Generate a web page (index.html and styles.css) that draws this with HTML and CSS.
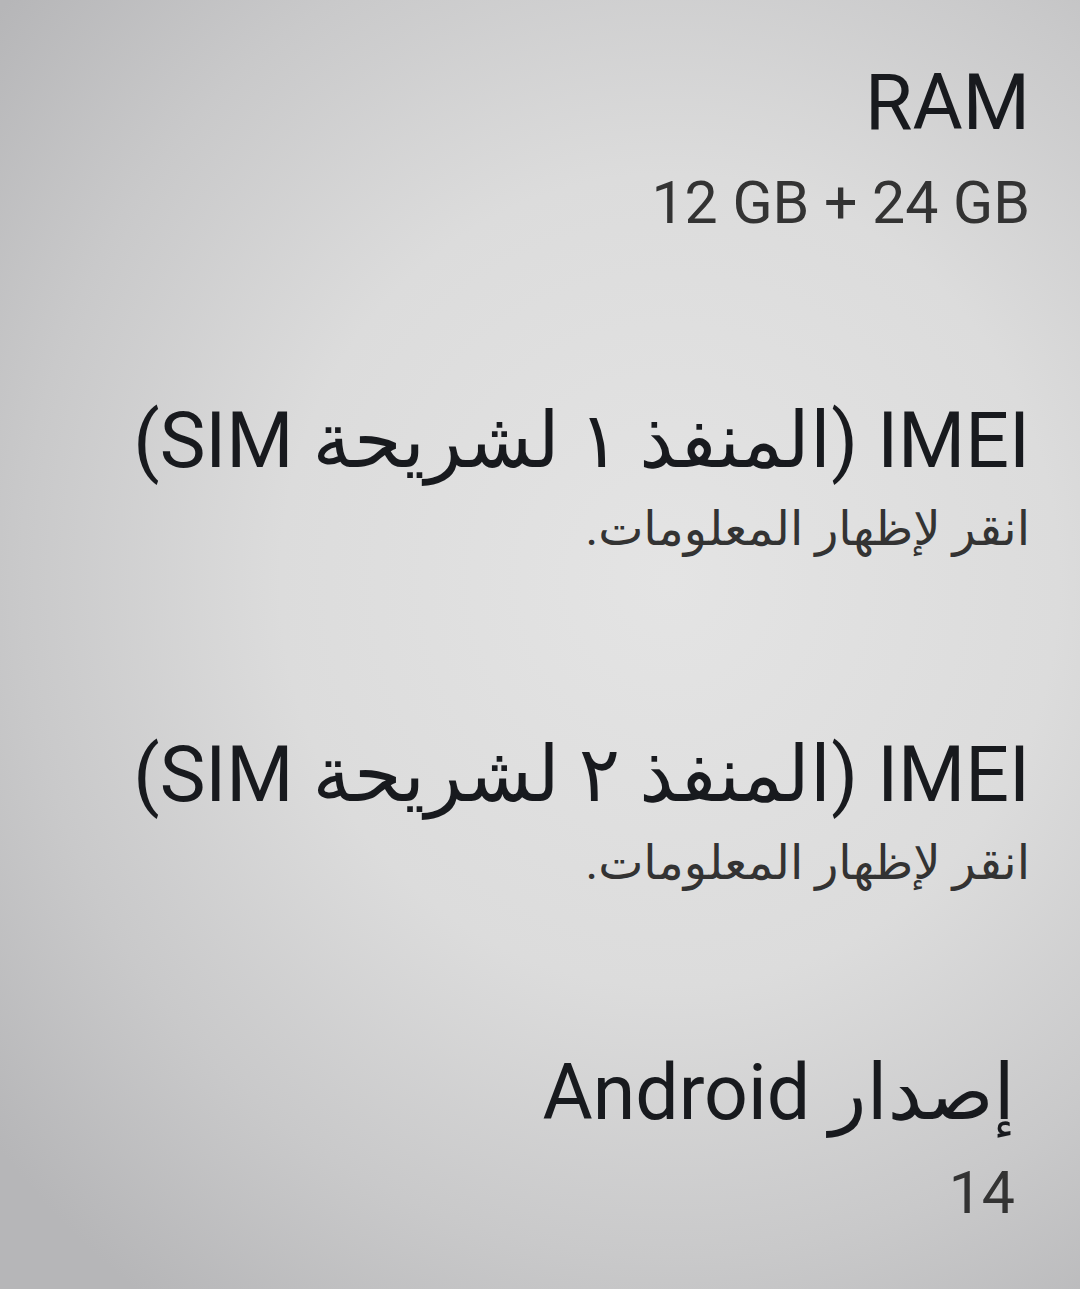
FILE: index.html
```html
<!DOCTYPE html>
<html lang="ar" dir="rtl">
<head>
    <meta charset="UTF-8">
    <meta name="viewport" content="width=device-width, initial-scale=1.0">
    <title>حول الهاتف</title>
    <link rel="stylesheet" href="styles.css">
</head>
<body>
    <div class="screen">
        <div class="item item-ram">
            <div class="title">RAM</div>
            <div class="value" dir="ltr">12 GB + 24 GB</div>
        </div>

        <div class="item">
            <div class="title">IMEI (المنفذ ١ لشريحة SIM)</div>
            <div class="value value-ar">انقر لإظهار المعلومات.</div>
        </div>

        <div class="item item-sim2">
            <div class="title">IMEI (المنفذ ٢ لشريحة SIM)</div>
            <div class="value value-ar">انقر لإظهار المعلومات.</div>
        </div>

        <div class="item item-android">
            <div class="title">إصدار Android</div>
            <div class="value" dir="ltr">14</div>
        </div>
    </div>
</body>
</html>
```

FILE: styles.css
```css
html, body {
    margin: 0;
    height: 100%;
}
body {
    font-family: Roboto, "DejaVu Sans", sans-serif;
    background: radial-gradient(ellipse 80% 70% at 62% 45%, #e4e4e4 0%, #dcdcdc 45%, #c9c9ca 75%, #b6b6b8 100%);
    color: #1b1b1b;
    overflow: hidden;
}
.screen {
    padding: 58px 50px 0 0;
}
.item {
    margin-bottom: 166px;
}
.item-ram {
    margin-bottom: 158px;
}
.item-sim2 {
    margin-bottom: 150px;
}
.item-android {
    margin-right: 15px;
    margin-bottom: 0;
}
.title {
    font-size: 77px;
    line-height: 90px;
    text-align: right;
    color: #181a1e;
}
.value {
    font-size: 59px;
    line-height: 70px;
    margin-top: 20px;
    text-align: right;
    color: #333;
}
.value-ar {
    font-size: 48px;
    margin-top: 8px;
}
```
